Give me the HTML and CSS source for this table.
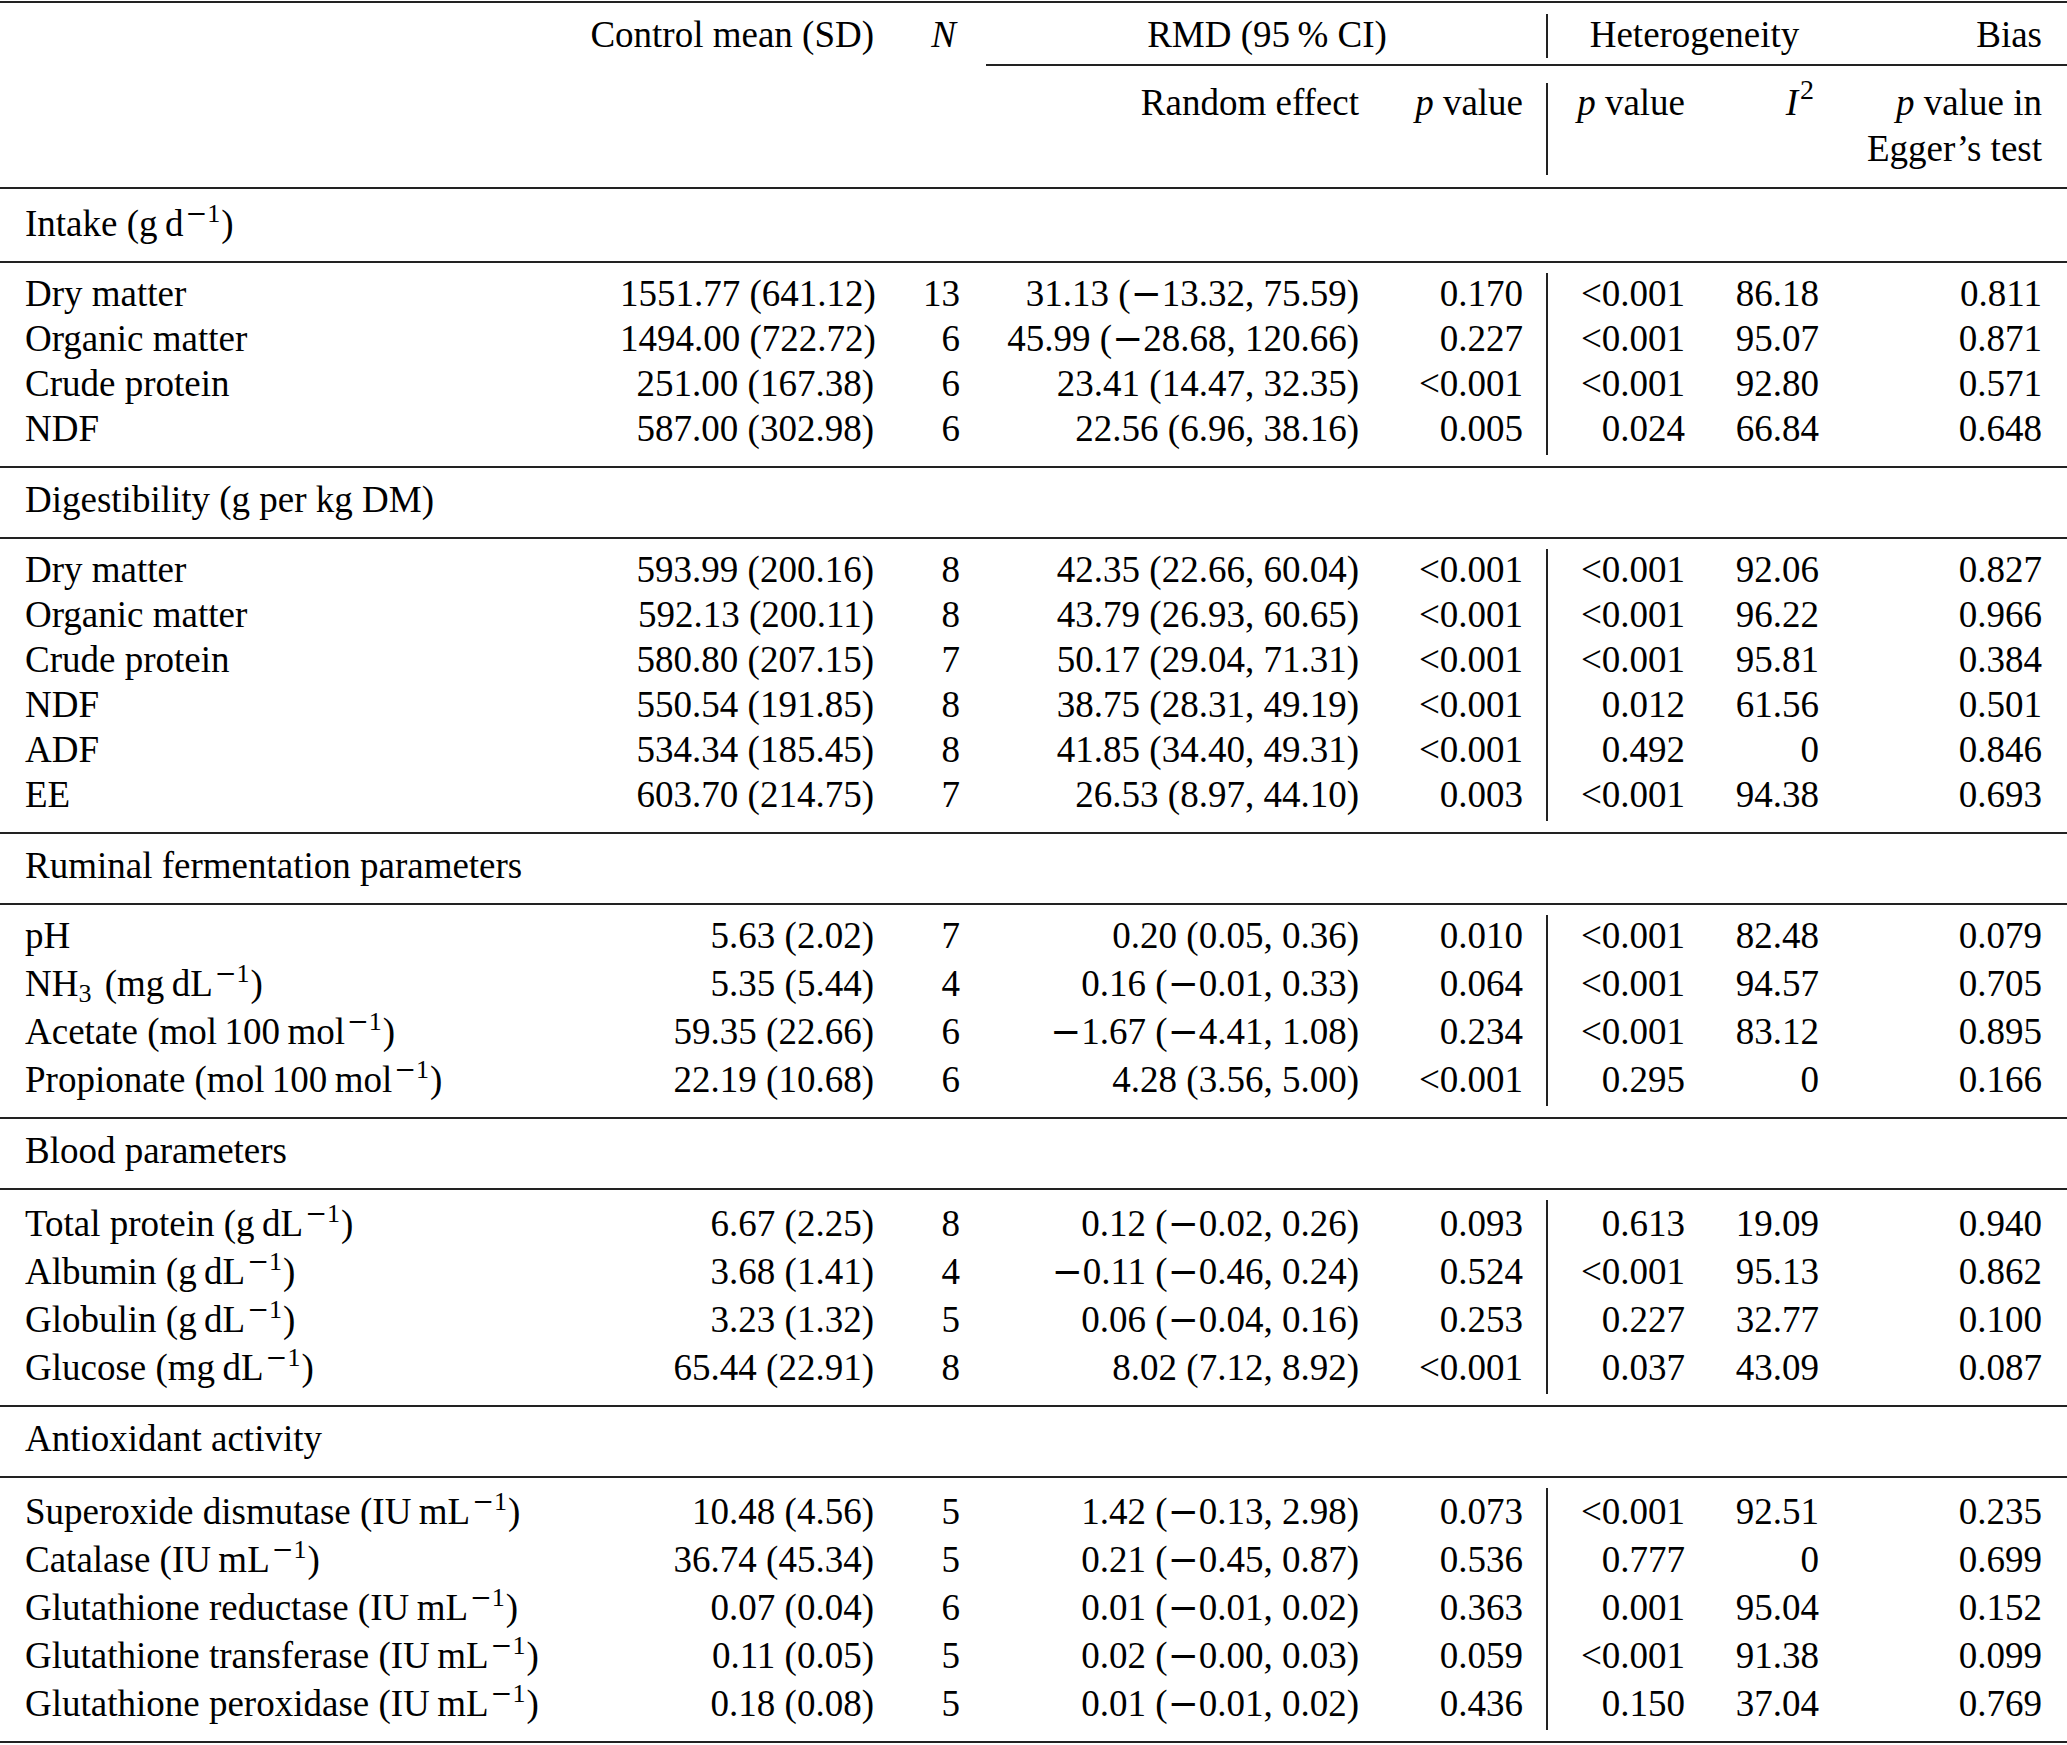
FILE: index.html
```html
<!DOCTYPE html>
<html lang="en">
<head>
<meta charset="utf-8">
<title>Table</title>
<link rel="stylesheet" href="styles.css">
</head>
<body>
<main class="table">
  <header class="thead">
    <div class="th ctrl">Control mean (SD)</div>
    <div class="th ncol"><i>N</i></div>
    <div class="th rmd">RMD (95&thinsp;% CI)</div>
    <div class="th het">Heterogeneity</div>
    <div class="th bias">Bias</div>
    <div class="cmid"></div>
    <div class="th r3 c4">Random effect</div>
    <div class="th r3 c5"><i>p</i> value</div>
    <div class="th r3 c7"><i>p</i> value</div>
    <div class="th r3 c8 i2"><i>I</i><sup class="s">2</sup></div>
    <div class="th r3 c9 egger"><i>p</i> value in<br>Egger’s test</div>
  </header>

  <div class="title tall">Intake (g&thinsp;d<sup class="s"><span class="m">−</span>1</sup>)</div>
  <section class="data">
    <div class="row"><span class="lab">Dry matter</span><span>1551.77 (641.12)</span><span>13</span><span>31.13 (<span class="m">−</span>13.32, 75.59)</span><span>0.170</span><span class="hp">&lt;0.001</span><span>86.18</span><span>0.811</span></div>
    <div class="row"><span class="lab">Organic matter</span><span>1494.00 (722.72)</span><span>6</span><span>45.99 (<span class="m">−</span>28.68, 120.66)</span><span>0.227</span><span class="hp">&lt;0.001</span><span>95.07</span><span>0.871</span></div>
    <div class="row"><span class="lab">Crude protein</span><span>251.00 (167.38)</span><span>6</span><span>23.41 (14.47, 32.35)</span><span>&lt;0.001</span><span class="hp">&lt;0.001</span><span>92.80</span><span>0.571</span></div>
    <div class="row"><span class="lab">NDF</span><span>587.00 (302.98)</span><span>6</span><span>22.56 (6.96, 38.16)</span><span>0.005</span><span class="hp">0.024</span><span>66.84</span><span>0.648</span></div>
  </section>

  <div class="title">Digestibility (g per kg DM)</div>
  <section class="data">
    <div class="row"><span class="lab">Dry matter</span><span>593.99 (200.16)</span><span>8</span><span>42.35 (22.66, 60.04)</span><span>&lt;0.001</span><span class="hp">&lt;0.001</span><span>92.06</span><span>0.827</span></div>
    <div class="row"><span class="lab">Organic matter</span><span>592.13 (200.11)</span><span>8</span><span>43.79 (26.93, 60.65)</span><span>&lt;0.001</span><span class="hp">&lt;0.001</span><span>96.22</span><span>0.966</span></div>
    <div class="row"><span class="lab">Crude protein</span><span>580.80 (207.15)</span><span>7</span><span>50.17 (29.04, 71.31)</span><span>&lt;0.001</span><span class="hp">&lt;0.001</span><span>95.81</span><span>0.384</span></div>
    <div class="row"><span class="lab">NDF</span><span>550.54 (191.85)</span><span>8</span><span>38.75 (28.31, 49.19)</span><span>&lt;0.001</span><span class="hp">0.012</span><span>61.56</span><span>0.501</span></div>
    <div class="row"><span class="lab">ADF</span><span>534.34 (185.45)</span><span>8</span><span>41.85 (34.40, 49.31)</span><span>&lt;0.001</span><span class="hp">0.492</span><span>0</span><span>0.846</span></div>
    <div class="row"><span class="lab">EE</span><span>603.70 (214.75)</span><span>7</span><span>26.53 (8.97, 44.10)</span><span>0.003</span><span class="hp">&lt;0.001</span><span>94.38</span><span>0.693</span></div>
  </section>

  <div class="title">Ruminal fermentation parameters</div>
  <section class="data">
    <div class="row"><span class="lab">pH</span><span>5.63 (2.02)</span><span>7</span><span>0.20 (0.05, 0.36)</span><span>0.010</span><span class="hp">&lt;0.001</span><span>82.48</span><span>0.079</span></div>
    <div class="row tall"><span class="lab">NH<sub class="sb">3</sub> (mg&thinsp;dL<sup class="s"><span class="m">−</span>1</sup>)</span><span>5.35 (5.44)</span><span>4</span><span>0.16 (<span class="m">−</span>0.01, 0.33)</span><span>0.064</span><span class="hp">&lt;0.001</span><span>94.57</span><span>0.705</span></div>
    <div class="row tall"><span class="lab">Acetate (mol&thinsp;100&thinsp;mol<sup class="s"><span class="m">−</span>1</sup>)</span><span>59.35 (22.66)</span><span>6</span><span><span class="m">−</span>1.67 (<span class="m">−</span>4.41, 1.08)</span><span>0.234</span><span class="hp">&lt;0.001</span><span>83.12</span><span>0.895</span></div>
    <div class="row tall"><span class="lab">Propionate (mol&thinsp;100&thinsp;mol<sup class="s"><span class="m">−</span>1</sup>)</span><span>22.19 (10.68)</span><span>6</span><span>4.28 (3.56, 5.00)</span><span>&lt;0.001</span><span class="hp">0.295</span><span>0</span><span>0.166</span></div>
  </section>

  <div class="title">Blood parameters</div>
  <section class="data">
    <div class="row tall"><span class="lab">Total protein (g&thinsp;dL<sup class="s"><span class="m">−</span>1</sup>)</span><span>6.67 (2.25)</span><span>8</span><span>0.12 (<span class="m">−</span>0.02, 0.26)</span><span>0.093</span><span class="hp">0.613</span><span>19.09</span><span>0.940</span></div>
    <div class="row tall"><span class="lab">Albumin (g&thinsp;dL<sup class="s"><span class="m">−</span>1</sup>)</span><span>3.68 (1.41)</span><span>4</span><span><span class="m">−</span>0.11 (<span class="m">−</span>0.46, 0.24)</span><span>0.524</span><span class="hp">&lt;0.001</span><span>95.13</span><span>0.862</span></div>
    <div class="row tall"><span class="lab">Globulin (g&thinsp;dL<sup class="s"><span class="m">−</span>1</sup>)</span><span>3.23 (1.32)</span><span>5</span><span>0.06 (<span class="m">−</span>0.04, 0.16)</span><span>0.253</span><span class="hp">0.227</span><span>32.77</span><span>0.100</span></div>
    <div class="row tall"><span class="lab">Glucose (mg&thinsp;dL<sup class="s"><span class="m">−</span>1</sup>)</span><span>65.44 (22.91)</span><span>8</span><span>8.02 (7.12, 8.92)</span><span>&lt;0.001</span><span class="hp">0.037</span><span>43.09</span><span>0.087</span></div>
  </section>

  <div class="title">Antioxidant activity</div>
  <section class="data">
    <div class="row tall"><span class="lab">Superoxide dismutase (IU&thinsp;mL<sup class="s"><span class="m">−</span>1</sup>)</span><span>10.48 (4.56)</span><span>5</span><span>1.42 (<span class="m">−</span>0.13, 2.98)</span><span>0.073</span><span class="hp">&lt;0.001</span><span>92.51</span><span>0.235</span></div>
    <div class="row tall"><span class="lab">Catalase (IU&thinsp;mL<sup class="s"><span class="m">−</span>1</sup>)</span><span>36.74 (45.34)</span><span>5</span><span>0.21 (<span class="m">−</span>0.45, 0.87)</span><span>0.536</span><span class="hp">0.777</span><span>0</span><span>0.699</span></div>
    <div class="row tall"><span class="lab">Glutathione reductase (IU&thinsp;mL<sup class="s"><span class="m">−</span>1</sup>)</span><span>0.07 (0.04)</span><span>6</span><span>0.01 (<span class="m">−</span>0.01, 0.02)</span><span>0.363</span><span class="hp">0.001</span><span>95.04</span><span>0.152</span></div>
    <div class="row tall"><span class="lab">Glutathione transferase (IU&thinsp;mL<sup class="s"><span class="m">−</span>1</sup>)</span><span>0.11 (0.05)</span><span>5</span><span>0.02 (<span class="m">−</span>0.00, 0.03)</span><span>0.059</span><span class="hp">&lt;0.001</span><span>91.38</span><span>0.099</span></div>
    <div class="row tall"><span class="lab">Glutathione peroxidase (IU&thinsp;mL<sup class="s"><span class="m">−</span>1</sup>)</span><span>0.18 (0.08)</span><span>5</span><span>0.01 (<span class="m">−</span>0.01, 0.02)</span><span>0.436</span><span class="hp">0.150</span><span>37.04</span><span>0.769</span></div>
  </section>
</main>
</body>
</html>
```

FILE: styles.css
```css
:root {
  --cols: 620px 254px 86px 399px 164px 25px 137px 134px 223px 25px;
  --rule: #222;
}

html, body {
  margin: 0;
  padding: 0;
  background: #fff;
}

body {
  font-family: "Liberation Serif", "Times New Roman", serif;
  font-size: 37px;
  color: #000;
  overflow: hidden;
}

.table {
  width: 2067px;
  margin-top: 1px;
  border-bottom: 2px solid var(--rule);
}

/* ---------- header ---------- */
.thead {
  display: grid;
  grid-template-columns: var(--cols);
  grid-template-rows: 45px auto auto;
  align-items: start;
  line-height: 45px;
  border-top: 2px solid var(--rule);
  padding: 9px 0 15.3px;
  background-image: linear-gradient(var(--rule), var(--rule)), linear-gradient(var(--rule), var(--rule));
  background-repeat: no-repeat;
  background-position: 1546px 11px, 1546px 80px;
  background-size: 2px 44px, 2px 92px;
}

.th {
  text-align: right;
  white-space: nowrap;
}

.ctrl { grid-row: 1; grid-column: 1 / 3; }
.ncol { grid-row: 1; grid-column: 3; padding-right: 4px; }
.rmd  { grid-row: 1; grid-column: 4 / 7; text-align: center; padding-left: 26px; }
.het  { grid-row: 1; grid-column: 7 / 9; text-align: center; padding-left: 22px; }
.bias { grid-row: 1; grid-column: 9; }

.cmid {
  grid-row: 2;
  grid-column: 4 / -1;
  margin: 7px 0 0 26px;
  height: 2px;
  background: var(--rule);
}

.r3 { grid-row: 3; margin-top: 14px; }
.c4 { grid-column: 4; }
.c5 { grid-column: 5; }
.c7 { grid-column: 7; }
.c8 { grid-column: 8; }
.c9 { grid-column: 9; }
.i2 { padding-right: 4px; }
.i2 .s { font-size: 28px; vertical-align: 16px; }
.egger { line-height: 46px; }

/* ---------- group titles ---------- */
.title {
  border-top: 2px solid var(--rule);
  padding: 9px 0 14.5px 25px;
  line-height: 45px;
  white-space: nowrap;
}
.title.tall { padding-top: 12px; }

/* ---------- data blocks ---------- */
.data {
  border-top: 2px solid var(--rule);
  padding: 8px 0 15.5px;
  background-image: linear-gradient(var(--rule), var(--rule));
  background-repeat: no-repeat;
  background-position: 1546px 10px;
  background-size: 2px calc(100% - 21px);
}

.row {
  display: grid;
  grid-template-columns: var(--cols);
  line-height: 45px;
}
.row.tall { padding-top: 3px; }

.row > span {
  text-align: right;
  white-space: nowrap;
}
.row > .lab {
  text-align: left;
  padding-left: 25px;
}
.row > .hp { grid-column: 7; }

/* ---------- math bits ---------- */
.s {
  font-size: 26px;
  vertical-align: 14px;
  line-height: 0;
  margin-left: 2px;
  margin-right: 1px;
}
.sb {
  font-size: 26px;
  vertical-align: -6px;
  line-height: 0;
  margin-right: 4px;
}
.m {
  font-family: "DejaVu Serif", "Liberation Serif", serif;
  line-height: 0;
}
```
